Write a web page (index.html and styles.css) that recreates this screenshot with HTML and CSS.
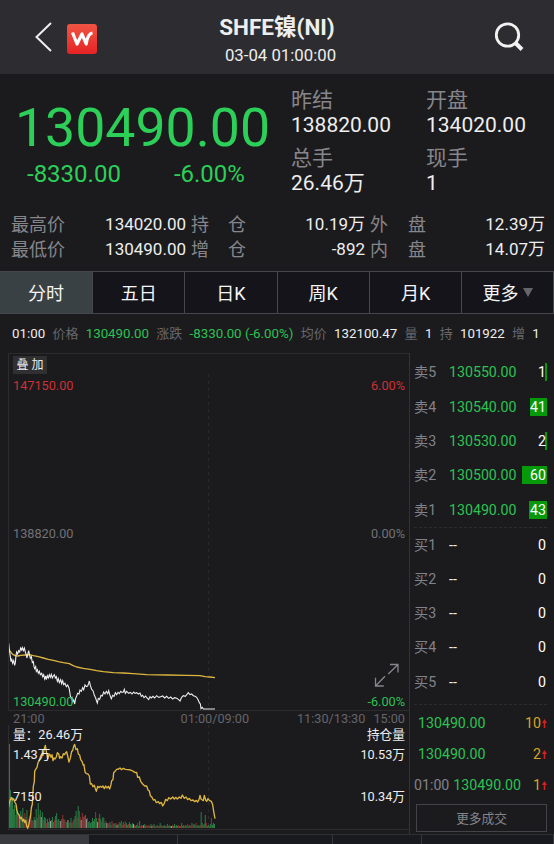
FILE: index.html
```html
<!DOCTYPE html>
<html lang="zh-CN">

<head>
    <meta charset="UTF-8">
    <meta name="viewport" content="width=device-width, initial-scale=1.0">
    <title>SHFE镍(NI)</title>
    <link rel="stylesheet" href="styles.css">
</head>

<body>
    <header>
        <svg class="back" width="18" height="32" viewBox="0 0 18 32"><path d="M16 2 1.500 16 16 30" /></svg>
        <span class="logo">
            <svg width="30" height="30" viewBox="0 0 30 30"><path d="M5.500 8.500 10 20l5-10 4.200 10c.8-6 2.300-10.500 6.300-11" /></svg>
        </span>
        <div class="title">
            <h1>SHFE镍(NI)</h1>
            <p>03-04 01:00:00</p>
        </div>
        <svg class="search" width="32" height="32" viewBox="0 0 32 32"><circle cx="13.500" cy="14" r="11.200" /><path class="handle" d="m21.500 22 6.500 6.500" /></svg>
    </header>

    <section class="quote">
        <div class="last">
            <strong>130490.00</strong>
            <div class="change"><span>-8330.00</span><span>-6.00%</span></div>
        </div>
        <dl class="summary">
            <div><dt>昨结</dt><dd>138820.00</dd></div>
            <div><dt>开盘</dt><dd>134020.00</dd></div>
            <div><dt>总手</dt><dd>26.46万</dd></div>
            <div><dt>现手</dt><dd>1</dd></div>
        </dl>
    </section>

    <dl class="details">
        <dt>最高价</dt><dd>134020.00</dd>
        <dt><i>持</i><i>仓</i></dt><dd>10.19万</dd>
        <dt><i>外</i><i>盘</i></dt><dd>12.39万</dd>
        <dt>最低价</dt><dd>130490.00</dd>
        <dt><i>增</i><i>仓</i></dt><dd>-892</dd>
        <dt><i>内</i><i>盘</i></dt><dd>14.07万</dd>
    </dl>

    <nav class="tabs">
        <a class="active">分时</a>
        <a>五日</a>
        <a>日K</a>
        <a>周K</a>
        <a>月K</a>
        <a>更多<span class="caret"></span></a>
    </nav>

    <div class="ticker">
        <b>01:00</b>
        <span>价格</span><b class="down">130490.00</b>
        <span>涨跌</span><b class="down">-8330.00 (-6.00%)</b>
        <span>均价</span><b>132100.47</b>
        <span>量</span><b>1</b>
        <span>持</span><b>101922</b>
        <span>增</span><b>1</b>
    </div>

    <main>
        <section class="charts">
            <div class="price">
                <svg class="plot" width="400" height="356" viewBox="0 0 400 356">
                    <path class="grid" d="M199.500 20v336" />
                    <g transform="translate(-9 276) scale(.33333)">
                        <polyline class="avg" points="26,57 32,66 38,73 46,77 54,78 62,76 75,75 88,74 100,77 115,80 130,84 145,88 160,91 175,95 190,98 208,101 218,106 230,111 250,115 270,118 290,122 310,125 340,128 370,129 400,131 440,134 500,135 560,136 600,137 615,140 630,141 645,143" />
                        <polyline class="line" points="26,40 29,66 31,80 33,95 35,86 38,100 41,92 44,106 46,98 48,76 50,66 53,72 56,62 59,66 62,54 65,60 67,53 70,62 73,54 76,66 79,76 81,84 84,70 86,62 89,76 91,85 94,80 97,98 100,95 102,110 104,116 107,110 109,124 112,119 115,130 118,124 121,134 125,130 128,140 131,134 134,147 137,138 139,149 142,137 145,144 148,134 151,142 154,133 157,144 160,138 163,134 166,144 169,140 172,154 175,146 178,158 182,149 185,161 188,152 191,164 195,160 199,170 203,165 207,174 209,184 211,198 214,206 216,203 218,215 221,210 224,222 227,205 230,198 233,190 237,192 240,180 244,184 248,173 251,179 255,165 259,170 263,168 266,160 268,153 271,166 275,178 279,182 283,196 287,204 290,214 292,219 295,205 299,208 303,196 307,198 311,186 315,192 319,184 323,191 326,182 330,196 334,206 338,196 342,199 346,188 350,194 354,187 358,191 362,184 366,187 370,186 373,178 376,190 380,184 386,190 391,187 396,192 401,186 405,190 410,188 415,192 420,189 424,199 428,196 432,203 437,198 441,204 446,209 450,200 454,204 459,199 464,204 470,197 476,202 482,200 488,198 494,204 500,199 506,205 512,201 518,207 524,203 530,205 536,209 540,213 545,202 550,197 556,199 561,193 565,188 570,194 575,192 580,197 585,199 590,202 595,211 598,218 601,222 603,236 607,232 610,237 645,237" />
                    </g>
                    <path class="expand" d="M381 310.500h8v8M389 310.500l-9.700 9.500M366.500 323.700v8.300h8.200M366.500 332l9.500-9.700" />
                </svg>
                <button class="overlay">叠 加</button>
                <div class="row up"><span>147150.00</span><span>6.00%</span></div>
                <div class="row mid"><span>138820.00</span><span>0.00%</span></div>
                <div class="row low"><span>130490.00</span><span>-6.00%</span></div>
            </div>
            <div class="times"><span>21:00</span><span>01:00/09:00</span><span>11:30/13:30</span><span>15:00</span></div>
            <div class="volume">
                <svg class="plot" width="400" height="104" viewBox="0 0 400 104">
                    <path class="grid" d="M199.500 0v104" />
                    <g class="bars"></g>
                    <g transform="translate(-9 -97) scale(.33333)">
                        <polyline class="avg" points="26,537 29,520 34,508 37,516 41,512 44,522 48,528 50,544 53,556 57,560 61,572 64,568 68,580 71,574 75,584 77,577 80,594 83,601 86,592 89,577 92,560 94,540 97,528 98,505 100,475 103,460 104,430 107,424 111,418 114,404 118,398 122,384 125,378 129,382 132,366 136,352 140,376 143,392 146,385 149,378 153,388 156,380 159,398 162,390 165,393 169,387 172,374 176,377 179,391 182,386 186,390 190,377 194,380 197,374 200,371 203,384 207,402 211,390 215,370 218,368 221,355 224,349 228,365 232,362 235,378 239,381 242,395 246,400 250,412 252,410 255,432 259,437 264,438 268,444 271,468 275,467 279,476 283,472 286,482 289,490 293,475 297,479 301,475 305,478 309,474 313,482 317,474 321,480 325,475 329,483 333,470 335,458 339,455 341,434 345,430 350,424 356,423 360,420 364,425 370,421 376,424 384,425 392,426 400,430 406,434 410,433 413,448 418,447 422,460 428,468 434,474 440,474 444,486 448,489 451,503 456,508 460,516 465,515 469,524 475,521 479,527 484,523 488,534 493,526 497,514 502,518 506,509 512,513 518,507 523,513 527,508 532,513 538,507 543,511 547,501 553,511 558,507 563,515 568,511 573,518 579,516 584,521 589,517 593,522 597,515 600,502 603,513 607,516 610,518 613,502 617,516 620,520 624,512 628,517 634,520 638,530 641,550 645,572" />
                    </g>
                </svg>
                <div class="row"><span>量：26.46万</span><span>持仓量</span></div>
                <div class="row"><span>1.43万</span><span>10.53万</span></div>
                <div class="row half"><span>7150</span><span>10.34万</span></div>
            </div>
        </section>

        <aside>
            <ul class="book">
                <li><span>卖5</span><b class="down">130550.00</b><em style="--bar: 2px">1</em></li>
                <li><span>卖4</span><b class="down">130540.00</b><em style="--bar: 17px">41</em></li>
                <li><span>卖3</span><b class="down">130530.00</b><em style="--bar: 2px">2</em></li>
                <li><span>卖2</span><b class="down">130500.00</b><em style="--bar: 25px">60</em></li>
                <li><span>卖1</span><b class="down">130490.00</b><em style="--bar: 18px">43</em></li>
                <li class="split"><span>买1</span><b>--</b><em>0</em></li>
                <li><span>买2</span><b>--</b><em>0</em></li>
                <li><span>买3</span><b>--</b><em>0</em></li>
                <li><span>买4</span><b>--</b><em>0</em></li>
                <li><span>买5</span><b>--</b><em>0</em></li>
            </ul>
            <ul class="trades">
                <li><b class="down">130490.00</b><em>10</em><i></i></li>
                <li><b class="down">130490.00</b><em>2</em><i></i></li>
                <li class="timed"><span>01:00</span><b class="down">130490.00</b><em>1</em><i></i></li>
            </ul>
            <button class="more">更多成交</button>
        </aside>
    </main>

    <footer><span></span><span></span><span></span><span></span><span></span></footer>

    <script>
        // volume per minute, one bar each: height in px, letter is the colour
        const volumes = 'g84 g38 g30 g31 g19 g23 r13 g22 g17 r14 w11 g17 r13 g20 g10 r15 r11 g18 r9 g7 r12 r14 g8 r7 g11 w8 g19 g10 g25 r13 g18 w11 g16 r8 g11 g10 r5 g9 g6 r10 w7 g8 g11 g6 r8 g12 g15 r8 g9 r7 w7 g9 r13 g9 r8 r6 g6 w8 g5 r6 g10 g5 r7 g9 g12 g17 r10 g22 g17 r11 w8 r15 g11 r12 g13 w9 r10 g6 r7 g5 r6 g10 g7 g9 r16 g10 w6 r10 g14 g9 r6 g11 g10 g5 r7 w5 g4 r5 g6 g3 r7 r4 g5 g4 r5 w3 g4 r6 g5 g7 r3 g6 r4 r7 g5 g3 r4 g6 g4 r3 g5 w4 r3 g2 g3 r5 g2 g7 r2 g3 r2 w3 g4 g2 r3 g2 r3 g2 g4 w2 r3 g4 g2 r2 g3 r2 g2 g5 r3 g2 r2 g3 g2 r2 g4 g2 r3 g2 w2 r3 g2 g4 r2 g3 g2 r3 g2 r2 g5 g2 g3 r2 g3 g2 r4 g2 g3 r2 g5 r3 g4 g3 r5 g2 g3 g2 r3 g16 g5 r3 g4 g13 r5 g2 g3 r2 g4 r10 g3 g5 g4';
        const colors = { g: '#287e44', r: '#9a2e30', w: '#9a9b9b' };

        const $bars = document.querySelector('.bars');
        const list = volumes.split(' ');
        const step = 206 / list.length;

        list.forEach((item, i) => {
            const height = Number(item.slice(1));
            const $bar = document.createElementNS('http://www.w3.org/2000/svg', 'rect');
            $bar.setAttribute('x', i * step);
            $bar.setAttribute('y', 103 - height);
            $bar.setAttribute('width', step);
            $bar.setAttribute('height', height);
            $bar.setAttribute('fill', colors[item[0]]);
            $bars.appendChild($bar);
        });
    </script>
</body>

</html>
```

FILE: styles.css
```css
* {
    box-sizing: border-box;
    margin: 0;
    padding: 0;
}

body {
    width: 554px;
    height: 844px;
    overflow: hidden;
    background: #1b1b1e;
    color: #eee;
    font-family: Roboto, 'Noto Sans CJK SC', sans-serif;
}

ul {
    list-style: none;
}

b,
i,
em {
    font-weight: normal;
    font-style: normal;
}

button {
    font-family: inherit;
    border: 0;
}

svg {
    fill: none;
}

.down {
    color: #2bc252;
}

header {
    display: grid;
    grid-template-columns: 18px 30px 1fr 32px;
    align-items: center;
    height: 74px;
    padding: 0 28px 0 35px;
    background: #2d2d31;

    .back {
        stroke: #eee;
        stroke-width: 2;
    }

    .logo {
        width: 30px;
        height: 30px;
        margin: 4px 0 0 14px;
        border-radius: 3px;
        background: linear-gradient(#f05543, #e52325);

        path {
            stroke: #fff;
            stroke-width: 3.200;
            stroke-linejoin: round;
        }
    }

    .title {
        padding-right: 23px;
        text-align: center;
    }

    h1 {
        height: 28px;
        margin-top: 8px;
        font-size: 22.500px;
        line-height: 27px;
    }

    p {
        padding-left: 7px;
        font-size: 16.800px;
        line-height: 27px;
    }

    .search {
        stroke: #f2f2f2;
        stroke-width: 2.800;

        .handle {
            stroke-width: 4;
        }
    }
}

.quote {
    display: flex;
    height: 138px;

    .last {
        width: 291px;
        padding: 20px 0 0 15px;
        color: #2ccf58;
    }

    strong {
        display: block;
        font-size: 53.600px;
        font-weight: normal;
        line-height: 67px;
    }

    .change {
        display: flex;
        gap: 53px;
        padding-left: 12px;
        font-size: 24px;
        line-height: 26px;
    }

    .summary {
        display: grid;
        grid-template-columns: 135px 120px;
        grid-auto-rows: 58px;
        padding-top: 14px;
        font-size: 21px;
        line-height: 25px;
    }
}

dt {
    color: #86868b;
}

.details {
    display: grid;
    grid-template-columns: 55px 120px 60px 119px 61px 119px;
    grid-auto-rows: 25px;
    height: 59px;
    padding: 0 9px 0 11px;
    font-size: 18px;
    line-height: 25px;

    dt {
        display: flex;
        justify-content: space-between;
        padding-left: 5px;
    }

    dt:nth-of-type(3n + 1) {
        padding-left: 0;
    }

    dd {
        font-size: 17px;
        text-align: right;
    }
}

.tabs {
    display: grid;
    grid-template-columns: 93px repeat(4, 92.300px) 1fr;
    height: 43px;
    border: 1px solid #46474b;
    border-width: 1px 0;
    background: #14141a;

    a {
        display: flex;
        justify-content: center;
        align-items: center;
        padding-bottom: 2px;
        border-right: 1px solid #46474b;
        color: #f5f5f5;
        font-size: 18px;
    }

    .active {
        background: #394145;
    }

    .caret {
        margin: 2px 0 0 4px;
        border: 5.500px solid transparent;
        border-width: 9px 5.500px 0;
        border-top-color: #65666a;
    }
}

.ticker {
    display: flex;
    justify-content: space-between;
    align-items: center;
    height: 39px;
    padding: 0 14px 0 12px;
    font-size: 13.300px;
    line-height: 18px;
    white-space: nowrap;

    span {
        color: #67676c;
        font-size: 13px;
    }
}

main {
    display: flex;
    height: 481px;
}

.charts {
    position: relative;
    width: 410px;
    padding-left: 8px;
    border-right: 1px solid #333336;
    font-size: 12.700px;
}

.row {
    position: relative;
    display: flex;
    justify-content: space-between;
    padding: 0 4px;
    line-height: 20px;
}

.plot {
    position: absolute;
    top: 0;
    left: 0;

    .grid {
        stroke: #2a2a2d;
        stroke-dasharray: 3 4;
    }

    .line {
        stroke: #ededed;
        stroke-width: 3.300;
    }

    .avg {
        stroke: #ddb53e;
        stroke-width: 4;
        stroke-linejoin: round;
    }

    .expand {
        stroke: #86868a;
        stroke-width: 1.300;
    }
}

.price {
    position: relative;
    display: flex;
    flex-direction: column;
    height: 358px;
    border: 1px solid #2c2c2f;
    border-right: 0;

    .overlay {
        position: relative;
        width: 34px;
        height: 18px;
        margin: 2px 0 0 4px;
        background: #303033;
        color: #eee;
        font-size: 12px;
        line-height: 18px;
    }

    .up {
        margin-top: 2px;
        color: #cf3034;
    }

    .mid {
        margin-top: 128px;
        color: #727276;
    }

    .low {
        margin-top: auto;
        color: #2bc252;
        line-height: 17px;
    }
}

.times {
    display: flex;
    padding: 0 4px 0 5px;
    color: #65656a;
    line-height: 16px;

    span:nth-child(2) {
        margin-left: 136px;
    }

    span:nth-child(3) {
        margin-left: auto;
    }

    span:nth-child(4) {
        margin-left: 8px;
    }
}

.volume {
    position: relative;
    height: 105px;
    border: 1px solid #2c2c2f;
    border-width: 0 0 1px 1px;

    .row:first-of-type {
        margin-top: -2px;
    }

    .half {
        margin-top: 22px;
    }
}

aside {
    width: 144px;
    padding: 2px 7px 0 4px;
    font-size: 14.200px;
    line-height: 18px;

    li {
        display: flex;
        align-items: center;
    }

    span {
        color: #82828a;
    }
}

.book {
    li {
        height: 34.400px;
    }

    span {
        width: 35px;
    }

    em {
        display: flex;
        justify-content: flex-end;
        align-items: center;
        flex: 1;
        height: 18px;
        padding-right: 1px;
        background: linear-gradient(#069a0b, #069a0b) right / var(--bar, 0) 100% no-repeat;
        color: #fff;
    }

    .split {
        border-top: 1px dashed #2c2c30;
    }
}

.trades {
    margin-top: 5px;
    padding-top: 3px;
    border-top: 1px dashed #2c2c30;

    li {
        height: 31px;
        padding-left: 4px;
    }

    .timed {
        padding-left: 0;

        b {
            margin-left: 4px;
        }
    }

    em {
        margin-left: auto;
        color: #d8a32a;
    }

    i {
        width: 5px;
        height: 9px;
        margin-left: 1px;
        background: #d42020;
        clip-path: polygon(50% 0, 100% 45%, 65% 45%, 65% 100%, 35% 100%, 35% 45%, 0 45%);
    }
}

.more {
    display: block;
    width: 131px;
    height: 28px;
    margin: 3px 0 0 2px;
    border: 1px solid #434348;
    background: none;
    color: #85858a;
    font-size: 12.700px;
}

footer {
    display: grid;
    grid-template-columns: 89px 89px 155px 89px 1fr;
    height: 10px;
    border-top: 1px solid #303034;
    background: #191a20;

    span {
        border-right: 1px solid #37373c;
    }

    span:first-child {
        background: #3a3b41;
        border: 0;
    }
}
```
